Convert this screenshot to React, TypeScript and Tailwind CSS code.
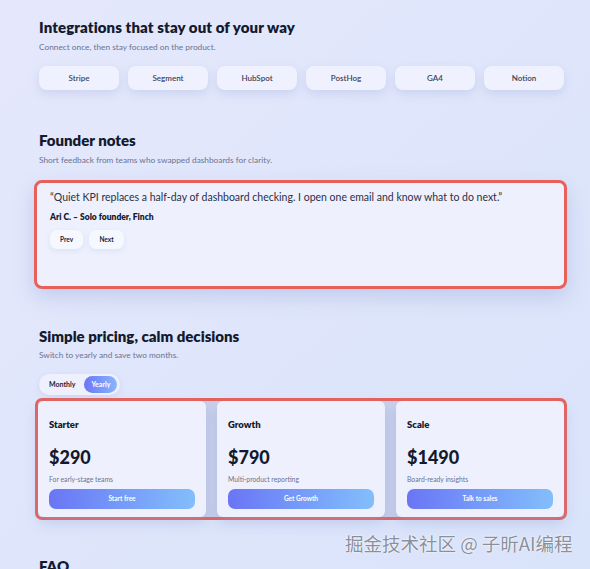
import React from "react";

const font = { fontFamily: "Lato, 'Noto Sans', 'Liberation Sans', sans-serif" };

const integrations = ["Stripe", "Segment", "HubSpot", "PostHog", "GA4", "Notion"];

const plans = [
  { name: "Starter", price: "$290", desc: "For early-stage teams", cta: "Start free" },
  { name: "Growth", price: "$790", desc: "Multi-product reporting", cta: "Get Growth" },
  { name: "Scale", price: "$1490", desc: "Board-ready insights", cta: "Talk to sales" },
];

export default function App() {
  return (
    <div
      className="relative w-[590px] h-[569px] overflow-hidden bg-gradient-to-br from-[#e5e8fb] via-[#dfe6fb] to-[#d9e3fa] text-[#141a2e]"
      style={font}
    >
      <div className="ml-[39px] w-[525px] pt-[17px]">
        {/* Integrations */}
        <section>
          <h2 className="text-[15px] font-extrabold leading-[20px] tracking-[0.1px]">
            Integrations that stay out of your way
          </h2>
          <p className="mt-[5px] text-[8.3px] leading-[10px] text-[#6b7290]">
            Connect once, then stay focused on the product.
          </p>
          <div className="mt-[14px] grid grid-cols-6 gap-[9px]">
            {integrations.map((n) => (
              <div
                key={n}
                className="h-[24px] rounded-[8px] bg-[#eff2fe] shadow-[0_4px_10px_rgba(140,155,210,0.25)] flex items-center justify-center text-[8px] font-semibold text-[#3d4358]"
              >
                {n}
              </div>
            ))}
          </div>
        </section>

        {/* Founder notes */}
        <section className="mt-[40px]">
          <h2 className="text-[15px] font-extrabold leading-[20px]">Founder notes</h2>
          <p className="mt-[5px] text-[8.3px] leading-[10px] text-[#6b7290]">
            Short feedback from teams who swapped dashboards for clarity.
          </p>
          <div className="mt-[15px] -ml-[5px] w-[533px] h-[109px] rounded-[8px] border-[3px] border-[#e8605a] bg-[#eef1fd] px-[13px] pt-[8px] shadow-[0_8px_20px_rgba(140,155,210,0.35)]">
            <p className="text-[10.5px] leading-[13px] text-[#2a3045]">
              “Quiet KPI replaces a half-day of dashboard checking. I open one email and know what to do next.”
            </p>
            <p className="mt-[8px] text-[8.5px] font-extrabold leading-[10px] text-[#141a2e]">
              Ari C. – Solo founder, Finch
            </p>
            <div className="mt-[8px] flex gap-[6px]">
              <button className="h-[19px] w-[33px] rounded-[7px] bg-[#f6f8ff] text-[6.5px] font-bold text-[#1c2236] shadow-[0_2px_6px_rgba(150,165,215,0.2)]">
                Prev
              </button>
              <button className="h-[19px] w-[35px] rounded-[7px] bg-[#f6f8ff] text-[6.5px] font-bold text-[#1c2236] shadow-[0_2px_6px_rgba(150,165,215,0.2)]">
                Next
              </button>
            </div>
          </div>
        </section>

        {/* Pricing */}
        <section className="mt-[37px]">
          <h2 className="text-[15px] font-extrabold leading-[20px]">Simple pricing, calm decisions</h2>
          <p className="mt-[4px] text-[8.3px] leading-[10px] text-[#6b7290]">
            Switch to yearly and save two months.
          </p>
          <div className="mt-[14px] inline-flex items-center h-[21px] w-[81px] rounded-full bg-[#eef1fd] pl-[10px] pr-[2px] gap-[9px] shadow-[0_2px_6px_rgba(150,165,215,0.25)]">
            <span className="text-[7px] font-bold text-[#1c2236]">Monthly</span>
            <span className="h-[17px] w-[33px] rounded-full bg-gradient-to-r from-[#6a75f5] to-[#8ab6fb] flex items-center justify-center text-[7px] font-bold text-white">
              Yearly
            </span>
          </div>
          <div className="-ml-[4px] mt-[3px] w-[532px] rounded-[7px] border-[3px] border-[#e8605a] bg-[#c9d1ec] grid grid-cols-3 gap-[11px]">
            {plans.map((p) => (
              <div
                key={p.name}
                className="h-[116px] rounded-[6px] bg-[#eef1fd] px-[11px] pt-[18px] shadow-[0_6px_14px_rgba(140,155,210,0.35)]"
              >
                <div className="text-[9.5px] font-extrabold leading-[11px]">{p.name}</div>
                <div className="mt-[16px] text-[18px] font-black leading-[22px]">{p.price}</div>
                <div className="mt-[7px] text-[6.8px] leading-[8px] text-[#6b7290]">{p.desc}</div>
                <button className="mt-[6px] w-full h-[20px] rounded-[7px] bg-gradient-to-r from-[#6a75f5] to-[#83befb] text-[6.5px] font-bold text-white">
                  {p.cta}
                </button>
              </div>
            ))}
          </div>
        </section>

        {/* FAQ */}
        <section className="mt-[36px]">
          <h2 className="text-[15px] font-extrabold leading-[20px]">FAQ</h2>
        </section>
      </div>

      <div
        className="absolute left-[345px] top-[531px] text-[18.5px] leading-[24px] text-[#8a8f9c] [text-shadow:0_0_2px_#ffffff,0_0_1px_#ffffff]"
        style={{ fontFamily: "'Noto Sans CJK SC', 'Noto Sans', sans-serif" }}
      >
        掘金技术社区 @ 子昕AI编程
      </div>
    </div>
  );
}
